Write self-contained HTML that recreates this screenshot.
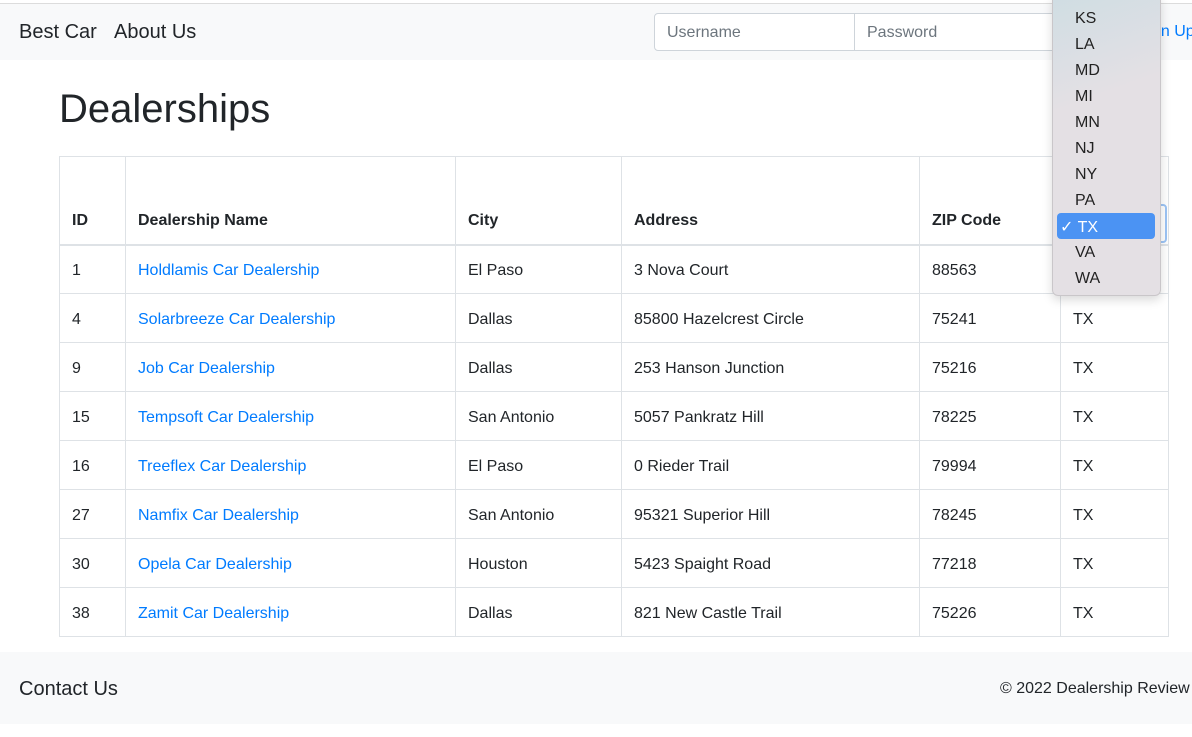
<!DOCTYPE html>
<html><head><meta charset="utf-8"><style>
*{box-sizing:border-box;margin:0;padding:0}
body{width:1192px;height:737px;background:#fff;font-family:"Liberation Sans",Arial,sans-serif;color:#212529;position:relative;overflow:hidden;font-size:16px}
.topline{position:absolute;left:0;top:3px;width:1192px;height:1px;background:#dcdcdc}
nav{position:absolute;left:0;top:4px;width:1192px;height:56px;background:#f8f9fa}
nav .l{position:absolute;top:17px;font-size:20px;color:#212529;white-space:nowrap}
.inp{position:absolute;top:9px;height:38px;border:1px solid #ced4da;background:#fff;color:#6c757d;font-size:16px;padding:10px 12px 0}
h1{position:absolute;left:59px;top:87px;font-size:40px;font-weight:500;color:#212529}
table{position:absolute;left:59px;top:156px;border-collapse:collapse;width:1110px;font-size:16px}
td,th{border:1px solid #dee2e6;padding:0 12px;text-align:left;vertical-align:middle}
th{height:88px;vertical-align:bottom;padding-bottom:14px;font-weight:bold;border-bottom:2px solid #dee2e6}
td{height:49px;padding-top:3px}
a{color:#007bff;text-decoration:none}
footer{position:absolute;left:0;top:652px;width:1192px;height:72px;background:#f8f9fa}
.dd{position:absolute;left:1052px;top:-6px;width:109px;height:302px;background:linear-gradient(160deg,#cfdde3 0%,#e4e0e4 35%,#e4e0e4 100%);border:1px solid #c9c6c9;border-radius:6px;box-shadow:0 4px 10px rgba(0,0,0,.15)}
.dd div{position:absolute;left:22px;font-size:16px;color:#222}
.sel{position:absolute;left:1057px;top:213px;width:98px;height:26px;background:#4b93f3;border-radius:4px;color:#fff;font-size:16px;padding:4px 0 0 3px}
</style></head><body>
<div class="topline"></div>
<nav>
<span class="l" style="left:19px">Best Car</span>
<span class="l" style="left:114px">About Us</span>
<div class="inp" style="left:654px;width:201px;border-radius:4px 0 0 4px">Username</div>
<div class="inp" style="left:854px;width:210px">Password</div>
<span class="l" style="left:1152px;color:#007bff;font-size:16px;top:19px">gn Up</span>
</nav>
<h1>Dealerships</h1>
<table>
<tr><th style="width:66px">ID</th><th style="width:330px">Dealership Name</th><th style="width:166px">City</th><th style="width:298px">Address</th><th style="width:141px">ZIP Code</th><th>State</th></tr>
<tr><td>1</td><td><a>Holdlamis Car Dealership</a></td><td>El Paso</td><td>3 Nova Court</td><td>88563</td><td>TX</td></tr>
<tr><td>4</td><td><a>Solarbreeze Car Dealership</a></td><td>Dallas</td><td>85800 Hazelcrest Circle</td><td>75241</td><td>TX</td></tr>
<tr><td>9</td><td><a>Job Car Dealership</a></td><td>Dallas</td><td>253 Hanson Junction</td><td>75216</td><td>TX</td></tr>
<tr><td>15</td><td><a>Tempsoft Car Dealership</a></td><td>San Antonio</td><td>5057 Pankratz Hill</td><td>78225</td><td>TX</td></tr>
<tr><td>16</td><td><a>Treeflex Car Dealership</a></td><td>El Paso</td><td>0 Rieder Trail</td><td>79994</td><td>TX</td></tr>
<tr><td>27</td><td><a>Namfix Car Dealership</a></td><td>San Antonio</td><td>95321 Superior Hill</td><td>78245</td><td>TX</td></tr>
<tr><td>30</td><td><a>Opela Car Dealership</a></td><td>Houston</td><td>5423 Spaight Road</td><td>77218</td><td>TX</td></tr>
<tr><td>38</td><td><a>Zamit Car Dealership</a></td><td>Dallas</td><td>821 New Castle Trail</td><td>75226</td><td>TX</td></tr>
</table>
<div style="position:absolute;left:1060px;top:204px;width:107px;height:39px;border:2px solid #9cc4f5;border-radius:4px;background:#fff"></div>
<div class="dd">
<div style="top:15px">KS</div><div style="top:41px">LA</div><div style="top:67px">MD</div><div style="top:93px">MI</div><div style="top:119px">MN</div><div style="top:145px">NJ</div><div style="top:171px">NY</div><div style="top:197px">PA</div><div style="top:249px">VA</div><div style="top:275px">WA</div>
</div>
<div class="sel">✓ TX</div>
<footer>
<span style="position:absolute;left:19px;top:26px;font-size:20px">Contact Us</span>
<span style="position:absolute;left:1000px;top:28px;font-size:16px;white-space:nowrap">© 2022 Dealership Review</span>
</footer>
</body></html>
